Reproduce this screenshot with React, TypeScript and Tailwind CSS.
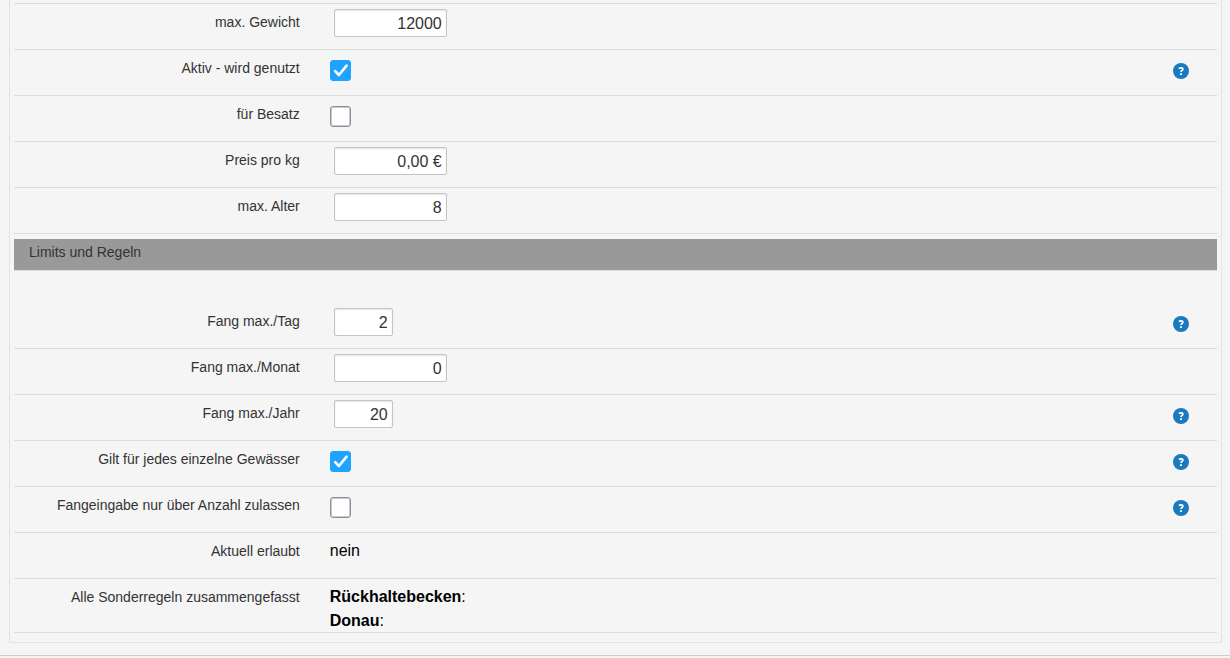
import type { ReactNode } from "react"

interface FormRowProps {
  label: string
  /** id of the control that the label belongs to */
  htmlFor?: string
  /** Shows the help button at the end of the row */
  help?: boolean
  children: ReactNode
}

/**
 * HelpIcon Component
 * Question mark in a filled circle
 */
function HelpIcon() {
  return (
    <svg viewBox="0 0 16 16" className="size-4" fill="none" aria-hidden="true">
      <circle cx="8" cy="8" r="8" fill="#1a7abf" />
      <path
        d="M5.9 5.5C6.8 4.7 9.9 4.3 9.9 6.2 9.9 7.5 8 7.4 8 9.1"
        stroke="#fff"
        strokeWidth="1.7"
      />
      <path d="M7 10.2h2v1.7H7z" fill="#fff" />
    </svg>
  )
}

/**
 * FormRow Component
 * Right aligned label, the value next to it and an optional help button
 */
function FormRow({ label, htmlFor, help, children }: FormRowProps) {
  const labelClass = "pt-1.5 text-sm leading-6 text-[#333]"

  return (
    <div className="flex min-h-[46px] items-start border-b border-[#ddd]">
      <div className="w-1/4 shrink-0 px-[15px] text-right">
        {htmlFor ? (
          <label htmlFor={htmlFor} className={`block ${labelClass}`}>
            {label}
          </label>
        ) : (
          <p className={labelClass}>{label}</p>
        )}
      </div>
      <div className="min-w-0 flex-1 px-[15px]">{children}</div>
      {help && (
        <button
          type="button"
          aria-label={`Hilfe: ${label}`}
          className="mt-[13px] mr-7 shrink-0 cursor-pointer rounded-full"
        >
          <HelpIcon />
        </button>
      )}
    </div>
  )
}

function NumberInput({
  id,
  value,
  small,
}: {
  id: string
  value: string
  small?: boolean
}) {
  return (
    <input
      id={id}
      type="text"
      inputMode="decimal"
      defaultValue={value}
      className={`${
        small ? "w-[59px]" : "w-[113px]"
      } mt-[5px] ml-1 block h-7 rounded-xs border border-[#c4c4c4] bg-white px-1 pt-0.5 text-right text-base text-[#333] shadow-[inset_0_1px_2px_rgba(0,0,0,0.1)]`}
    />
  )
}

function Checkbox({ id, checked }: { id: string; checked?: boolean }) {
  return (
    <div className="mt-2.5 grid size-[21px] place-items-center">
      <input
        id={id}
        type="checkbox"
        defaultChecked={checked}
        className="peer col-start-1 row-start-1 size-[21px] appearance-none rounded-[3px] border border-[#8f8f9d] bg-white inset-ring inset-ring-[#c7c7ce] checked:border-[#1ea4ff] checked:bg-[#1ea4ff] checked:inset-ring-[#1ea4ff]"
      />
      <svg
        viewBox="0 0 21 21"
        className="pointer-events-none invisible col-start-1 row-start-1 size-[21px] peer-checked:visible"
        fill="none"
        stroke="#fff"
        strokeWidth="2.6"
        strokeLinecap="round"
        strokeLinejoin="round"
      >
        <path d="M5.2 11.2 8.9 15 16.6 5.6" />
      </svg>
    </div>
  )
}

export default function App() {
  return (
    <main className="bg-[#f5f5f5] font-['Liberation_Sans',Arial,sans-serif] text-base text-black">
      <form className="mr-2 ml-[9px] border-x border-b border-[#e3e3e3] px-1 pb-[9px]">
        <div className="h-1 border-b border-[#ddd]" />

        <FormRow label="max. Gewicht" htmlFor="max-gewicht">
          <NumberInput id="max-gewicht" value="12000" />
        </FormRow>
        <FormRow label="Aktiv - wird genutzt" htmlFor="aktiv" help>
          <Checkbox id="aktiv" checked />
        </FormRow>
        <FormRow label="für Besatz" htmlFor="besatz">
          <Checkbox id="besatz" />
        </FormRow>
        <FormRow label="Preis pro kg" htmlFor="preis">
          <NumberInput id="preis" value="0,00 €" />
        </FormRow>
        <FormRow label="max. Alter" htmlFor="max-alter">
          <NumberInput id="max-alter" value="8" />
        </FormRow>

        {/* Limits */}
        <h2 className="mt-[5px] mb-8 h-8 border-b border-[#ddd] bg-[#999] bg-clip-padding px-[15px] pt-px text-sm leading-6 text-[#333]">
          Limits und Regeln
        </h2>

        <FormRow label="Fang max./Tag" htmlFor="fang-tag" help>
          <NumberInput id="fang-tag" value="2" small />
        </FormRow>
        <FormRow label="Fang max./Monat" htmlFor="fang-monat">
          <NumberInput id="fang-monat" value="0" />
        </FormRow>
        <FormRow label="Fang max./Jahr" htmlFor="fang-jahr" help>
          <NumberInput id="fang-jahr" value="20" small />
        </FormRow>
        <FormRow label="Gilt für jedes einzelne Gewässer" htmlFor="gewaesser" help>
          <Checkbox id="gewaesser" checked />
        </FormRow>
        <FormRow
          label="Fangeingabe nur über Anzahl zulassen"
          htmlFor="nur-anzahl"
          help
        >
          <Checkbox id="nur-anzahl" />
        </FormRow>
        <FormRow label="Aktuell erlaubt">
          <p className="pt-1.5 leading-6">nein</p>
        </FormRow>
        <FormRow label="Alle Sonderregeln zusammengefasst">
          <div className="-mb-px pt-1.5 leading-6">
            <p>
              <strong>Rückhaltebecken</strong>:
            </p>
            <p>
              <strong>Donau</strong>:
            </p>
          </div>
        </FormRow>
      </form>
      <hr className="mt-3 border-[#ccc] pb-0.5" />
    </main>
  )
}
